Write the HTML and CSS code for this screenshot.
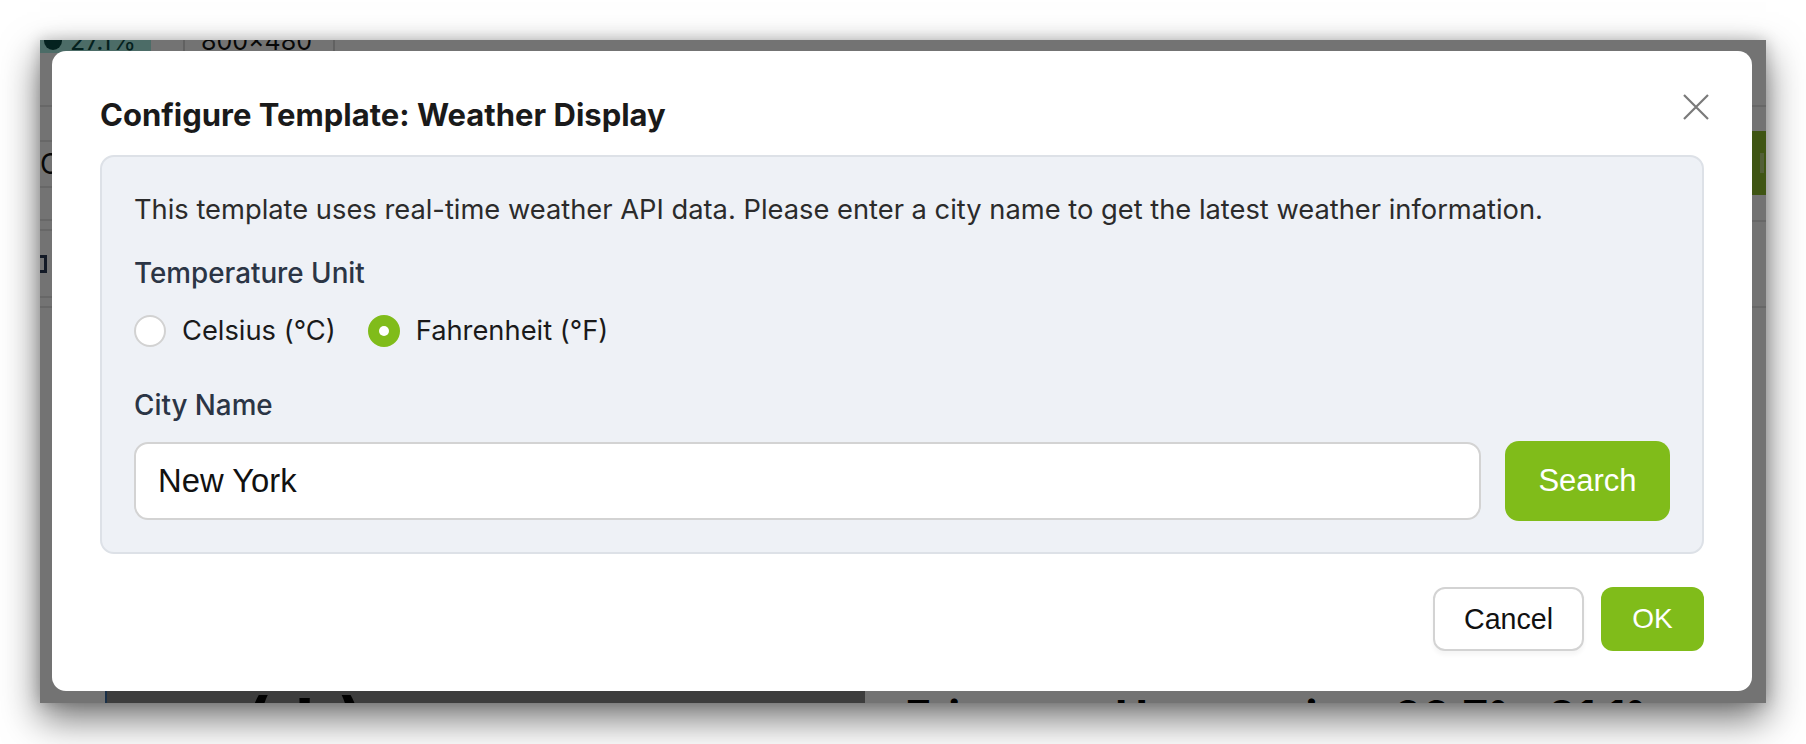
FILE: index.html
```html
<!DOCTYPE html>
<html lang="en">
<head>
    <meta charset="UTF-8">
    <meta name="viewport" content="width=device-width, initial-scale=1.0">
    <title>Configure Template</title>
    <link rel="stylesheet" href="styles.css">
</head>
<body>
    <div class="desk">
        <div class="window">
            <div class="screen">
                <div class="app">
                    <div class="app-top">
                        <div class="chip"><span class="chip-dot"></span>27.1%</div>
                        <div class="sep"></div>
                        <div class="res">800x480</div>
                        <div class="sep"></div>
                    </div>
                    <div class="app-body">
                        <div class="side">
                            <div class="row r1"></div>
                            <div class="row r2"></div>
                            <div class="row r3"><span class="side-text">Co</span></div>
                            <div class="row r4"></div>
                            <div class="row r5"></div>
                            <div class="row r6"><span class="side-box"></span></div>
                            <div class="row r7"></div>
                        </div>
                        <div class="main">
                            <div class="preview"><span class="preview-icon">( ! )</span></div>
                            <div class="forecast">
                                <span class="day">Fri</span>
                                <span class="cond"><span class="cond-icon">&#9729;</span>Heavy rain</span>
                                <span class="temp">66.7°</span>
                                <span class="temp">91.1°</span>
                            </div>
                        </div>
                        <div class="aside">
                            <div class="row a1"></div>
                            <div class="green-btn"><span></span></div>
                            <div class="row a2"></div>
                            <div class="row a3"></div>
                        </div>
                    </div>
                </div>

                <div class="overlay">
                    <div class="modal">
                        <div class="modal-header">
                            <h2>Configure Template: Weather Display</h2>
                            <button class="close" type="button" aria-label="Close">
                                <svg width="26" height="26" viewBox="0 0 26 26"><path d="M1 1 L25 25 M25 1 L1 25" stroke="#7a7a7a" stroke-width="2.2" fill="none"/></svg>
                            </button>
                        </div>

                        <div class="panel">
                            <p class="intro">This template uses real-time weather API data. Please enter a city name to get the latest weather information.</p>

                            <div class="field-label">Temperature Unit</div>
                            <div class="radios">
                                <label class="radio"><span class="dot"></span>Celsius (°C)</label>
                                <label class="radio"><span class="dot on"></span>Fahrenheit (°F)</label>
                            </div>

                            <div class="field-label city">City Name</div>
                            <div class="search-row">
                                <input type="text" class="city-input" value="New York">
                                <button type="button" class="btn btn-green search">Search</button>
                            </div>
                        </div>

                        <div class="modal-footer">
                            <button type="button" class="btn btn-plain">Cancel</button>
                            <button type="button" class="btn btn-green ok">OK</button>
                        </div>
                    </div>
                </div>
            </div>
        </div>
    </div>
</body>
</html>
```

FILE: styles.css
```css
html, body {
    margin: 0;
    background: #ffffff;
    font-family: 'Inter', 'Noto Sans', sans-serif;
}
.desk {
    padding: 40px;
    height: 744px;
    box-sizing: border-box;
}
.window {
    width: 1726px;
    height: 663px;
    background: #737373;
    box-shadow: 0 16px 36px rgba(0, 0, 0, 0.55), 0 0 14px rgba(0, 0, 0, 0.2);
}
.screen {
    position: relative;
    width: 100%;
    height: 100%;
    overflow: hidden;
    background: #ffffff;
}

/* app behind the dialog */
.app {
    height: 100%;
    display: flex;
    flex-direction: column;
}
.app-top {
    height: 13px;
    display: flex;
    align-items: flex-end;
    overflow: hidden;
    flex-shrink: 0;
}
.chip {
    width: 111px;
    height: 40px;
    background: #a9efe4;
    color: #0a4a44;
    font-size: 25px;
    line-height: 40px;
    margin-bottom: -8px;
    display: flex;
    align-items: center;
    gap: 8px;
    padding-left: 4px;
    box-sizing: border-box;
}
.chip-dot {
    width: 18px;
    height: 18px;
    border-radius: 50%;
    background: #0b4d46;
}
.sep {
    width: 2px;
    height: 20px;
    background: #d8d8d8;
    margin-left: 32px;
}
.res {
    font-size: 25px;
    color: #111;
    margin: 0 0 -8px 16px;
    line-height: 40px;
    width: 100px;
}
.app-body {
    flex: 1;
    display: flex;
}
.side {
    width: 60px;
    display: flex;
    flex-direction: column;
}
.row {
    border-bottom: 2px solid #e4e4e4;
    box-sizing: border-box;
    flex-shrink: 0;
}
.r1 { height: 54px; }
.r2 { height: 35px; }
.r3 { height: 46px; }
.side-text {
    display: block;
    font-size: 28px;
    line-height: 28px;
    margin-top: 8px;
    color: #111;
}
.r4 { height: 33px; }
.r5 { height: 10px; }
.r6 { height: 67px; }
.side-box {
    display: block;
    width: 4px;
    height: 12px;
    margin-top: 24px;
    border: 3px solid #2a3a55;
    border-left: none;
}
.r7 { height: 10px; }
.main {
    flex: 1;
    display: flex;
    align-items: flex-end;
}
.preview {
    width: 758px;
    height: 12px;
    margin-left: 5px;
    background: #888;
    border-left: 2px solid #3a6aa0;
    overflow: hidden;
}
.preview-icon {
    display: block;
    margin: -2px 0 0 138px;
    font-size: 66px;
    font-weight: 700;
    line-height: 66px;
    letter-spacing: 4px;
}
.forecast {
    height: 12px;
    overflow: hidden;
    display: flex;
    margin-left: 40px;
    font-size: 44px;
    font-weight: 700;
    line-height: 50px;
    color: #000;
}
.day { width: 148px; }
.cond {
    width: 340px;
    display: flex;
    gap: 18px;
}
.cond-icon { font-weight: 400; }
.temp { width: 155px; }
.aside {
    width: 28px;
    display: flex;
    flex-direction: column;
}
.a1 { height: 54px; }
.green-btn {
    height: 64px;
    margin-top: 24px;
    background: #8cbd2c;
    display: flex;
    justify-content: flex-end;
    align-items: center;
    flex-shrink: 0;
}
.green-btn span {
    width: 4px;
    height: 20px;
    background: #b5d37a;
    margin-right: 2px;
}
.a2 { height: 27px; }
.a3 { height: 86px; }

/* dialog */
.overlay {
    position: absolute;
    inset: 0;
    background: rgba(0, 0, 0, 0.55);
    padding: 11px 14px 12px 12px;
}
.modal {
    width: 1700px;
    height: 640px;
    background: #ffffff;
    border-radius: 14px;
    box-sizing: border-box;
    padding: 44px 48px 40px 48px;
    display: flex;
    flex-direction: column;
}
.modal-header {
    display: flex;
    justify-content: space-between;
    align-items: flex-start;
    margin-bottom: 20px;
}
h2 {
    margin: 0;
    font-size: 31px;
    line-height: 40px;
    font-weight: 700;
    color: #1a1a1a;
}
.close {
    background: none;
    border: none;
    padding: 0;
    margin: -1px -5px 0 0;
    cursor: pointer;
    display: flex;
}
.panel {
    background: #eef1f6;
    border: 2px solid #dde1e7;
    border-radius: 14px;
    padding: 34px 32px 31px 32px;
}
.intro {
    margin: 0;
    font-size: 27.3px;
    line-height: 38px;
    color: #2b2b2b;
}
.field-label {
    margin-top: 25px;
    font-size: 27.8px;
    line-height: 38px;
    font-weight: 500;
    color: #2b3545;
}
.radios {
    display: flex;
    gap: 32px;
    margin-top: 20px;
}
.radio {
    display: flex;
    align-items: center;
    gap: 16px;
    font-size: 27.3px;
    line-height: 38px;
    color: #1a1a1a;
}
.dot {
    width: 28px;
    height: 28px;
    border-radius: 50%;
    border: 2px solid #d2d2d2;
    background: #fff;
    box-sizing: content-box;
}
.dot.on {
    border-color: #80bc1a;
    background: #80bc1a;
    position: relative;
}
.dot.on::after {
    content: "";
    position: absolute;
    left: 9px;
    top: 9px;
    width: 10px;
    height: 10px;
    border-radius: 50%;
    background: #fff;
}
.field-label.city {
    margin-top: 36px;
}
.search-row {
    display: flex;
    align-items: center;
    gap: 24px;
    margin-top: 17px;
}
.city-input {
    flex: 1;
    height: 78px;
    box-sizing: border-box;
    border: 2px solid #d3d3d3;
    border-radius: 14px;
    background: #fff;
    padding: 0 22px;
    font-family: 'Liberation Sans', sans-serif;
    font-size: 32.8px;
    color: #111;
}
.btn {
    font-family: 'Liberation Sans', sans-serif;
    border-radius: 12px;
    cursor: pointer;
}
.btn-green {
    background: #80bc1a;
    color: #fff;
    border: none;
    font-size: 28px;
    height: 64px;
}
.btn-green.search {
    height: 80px;
    width: 165px;
    font-size: 31px;
    border-radius: 14px;
}
.btn-green.ok {
    width: 103px;
}
.btn-plain {
    background: #fff;
    border: 2px solid #d3d3d3;
    color: #111;
    font-size: 28.6px;
    height: 64px;
    width: 151px;
    box-shadow: 0 4px 4px rgba(0, 0, 0, 0.04);
}
.modal-footer {
    margin-top: auto;
    display: flex;
    justify-content: flex-end;
    gap: 17px;
}
```
